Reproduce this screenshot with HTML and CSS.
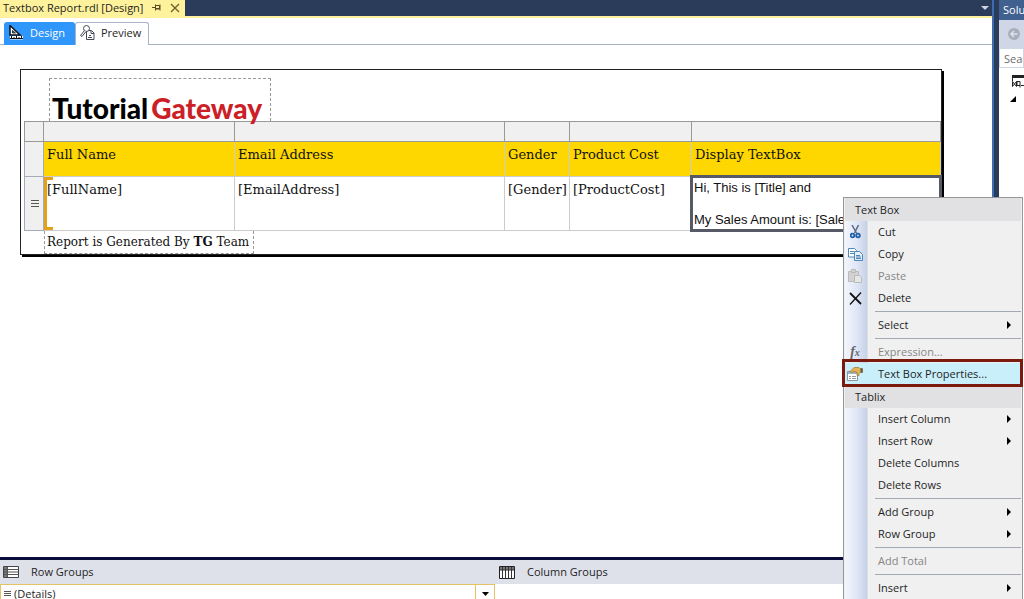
FILE: index.html
```
<!DOCTYPE html>
<html lang="en">
<head>
    <meta charset="UTF-8">
    <title>Textbox Report.rdl [Design]</title>
    <link rel="stylesheet" href="styles.css">
</head>
<body>

<div class="container">
    <main class="editor">
        <header class="titlebar">
            <div class="file">
                <span>Textbox Report.rdl [Design]</span>
                <button class="icon-btn" aria-label="Pin">
                    <svg width="9" height="8" viewBox="0 0 9 8" fill="none" stroke="#5c4a20"><path d="M0 3.500h3M3.500 0.500v6M3.500 1.500h4v3h-4M8 0.500v6M4 5h4"/></svg>
                </button>
                <button class="icon-btn" aria-label="Close">
                    <svg width="10" height="10" viewBox="0 0 10 10" fill="none" stroke="#75602c" stroke-width="1.400"><path d="M1 1l8 8M9 1l-8 8"/></svg>
                </button>
            </div>
            <button class="icon-btn" aria-label="Open files">
                <svg width="8" height="5" viewBox="0 0 8 5"><path d="M0 0h8l-4 4z" fill="#ced4e0"/></svg>
            </button>
        </header>

        <nav class="tabs">
            <button class="tab active">
                <svg width="15" height="15" viewBox="0 0 15 15"><path d="M1 0.500v9.500h10z" fill="#fff" stroke="#111" stroke-width="1.500"/><path d="M3.500 5.500v2.500h3z" fill="#2f96fb" stroke="#111" stroke-width="0.800"/><path d="M1 11h13v3.500h-13z" fill="#fff"/><path d="M1 13.500h13M2.500 11v2M5 12v1.500M7.500 11v2M10 12v1.500M12.500 11v2" stroke="#111" fill="none"/></svg>
                <span>Design</span>
            </button>
            <button class="tab">
                <svg width="15" height="15" viewBox="0 0 15 15" fill="#fff" stroke="#444a55"><path d="M6.500 5.500h5l2.500 2.500v6.500h-7.500z"/><path d="M11 5.500v3h3M8 12.500h4M9 10.500h2" fill="none"/><circle cx="6.500" cy="3.500" r="3"/><path d="M4.500 5.500l-4 5 1.500 1 4-5" /></svg>
                <span>Preview</span>
            </button>
        </nav>

        <section class="design">
            <div class="report">
                <div class="logo"><span>Tutorial</span><span class="red">Gateway</span></div>
                <table class="tablix">
                    <colgroup>
                        <col class="c-handle"><col class="c-name"><col class="c-email"><col class="c-gender"><col class="c-cost"><col>
                    </colgroup>
                    <thead>
                        <tr class="handles"><td></td><td></td><td></td><td></td><td></td><td></td></tr>
                        <tr class="heads">
                            <td class="handle"></td>
                            <th>Full Name</th>
                            <th>Email Address</th>
                            <th>Gender</th>
                            <th>Product Cost</th>
                            <th>Display TextBox</th>
                        </tr>
                    </thead>
                    <tbody>
                        <tr class="details">
                            <td class="handle"><svg width="8" height="8" viewBox="0 0 8 8" stroke="#555"><path d="M0 0.500h8M0 3.500h8M0 6.500h8"/></svg></td>
                            <td class="group">[FullName]</td>
                            <td>[EmailAddress]</td>
                            <td class="clip">[Gender]</td>
                            <td>[ProductCost]</td>
                            <td class="selected">
                                <p>Hi, This is [Title] and</p>
                                <p>My Sales Amount is: [Sales]</p>
                            </td>
                        </tr>
                    </tbody>
                </table>
                <div class="footer">Report is Generated By <b>TG</b> Team</div>
            </div>
        </section>

        <section class="groups">
            <div class="pane">
                <h3>
                    <svg width="16" height="13" viewBox="0 0 16 13"><path d="M0.500 0.500h15v11h-15z" fill="#fff" stroke="#444"/><path d="M1 1h3v10h-3z" fill="#777"/><path d="M1 3.500h14M1 6h14M1 8.500h14M4.500 1v10" stroke="#555"/></svg>
                    Row Groups
                </h3>
                <div class="row">
                    <svg width="7" height="6" viewBox="0 0 7 6" stroke="#555"><path d="M0 0.500h7M0 2.500h7M0 4.500h7"/></svg>
                    <span>(Details)</span>
                    <button class="arrow" aria-label="Group options">
                        <svg width="7" height="4" viewBox="0 0 7 4"><path d="M0 0h7l-3.500 4z"/></svg>
                    </button>
                </div>
            </div>
            <div class="pane">
                <h3>
                    <svg width="16" height="13" viewBox="0 0 16 13"><path d="M0.500 0.500h15v12h-15z" fill="#fff" stroke="#222"/><path d="M1 1h14v3h-14z" fill="#777"/><path d="M3.500 1v12M6.500 1v12M9.500 1v12M12.500 1v12M1 4h14" stroke="#333"/></svg>
                    Column Groups
                </h3>
            </div>
        </section>
    </main>

    <aside class="solution">
        <h2>Solution Explorer</h2>
        <div class="toolbar">
            <button class="icon-btn" aria-label="Back">
                <svg width="12" height="12" viewBox="0 0 12 12"><circle cx="6" cy="6" r="6" fill="#a9afba"/><path d="M9.500 6h-6M6 3l-3 3 3 3" fill="none" stroke="#dfe4ee" stroke-width="1.500"/></svg>
            </button>
        </div>
        <input class="search" type="text" placeholder="Search" aria-label="Search Solution Explorer">
        <div class="tree">
            <svg class="sln" width="16" height="14" viewBox="0 0 16 14" fill="none" stroke="#222"><path d="M0.500 6v-5h14" /><path d="M0 1.500h16" stroke-width="3"/><path d="M0.500 6.500l4 5v-5l-4 5zM5 6.500h3v6M5 6.500v4h3M9 10.500h6"/></svg>
            <svg width="6" height="6" viewBox="0 0 6 6"><path d="M6 0v6h-6z"/></svg>
        </div>
    </aside>

    <nav class="menu">
        <h4>Text Box</h4>
        <ul>
            <li><button><i><svg width="11" height="14" viewBox="0 0 11 14" fill="none"><path d="M2 0l4.500 8M8.500 0l-4 8" stroke="#5a6b80" stroke-width="1.500"/><circle cx="2.500" cy="10.500" r="1.800" stroke="#1c5fa8" stroke-width="1.800"/><circle cx="8" cy="10.500" r="1.800" stroke="#1c5fa8" stroke-width="1.800"/></svg></i>Cut</button></li>
            <li><button><i><svg width="15" height="13" viewBox="0 0 15 13" fill="#fff" stroke="#4e86b8"><path d="M0.500 0.500h6l2 2v6.500h-8z"/><path d="M2 3.500h4M2 5.500h4"/><path d="M6.500 3.500h5l3 3v6h-8z" fill="#e3f0fb"/><path d="M8 7.500h4M8 9h5M8 10.500h5" /></svg></i>Copy</button></li>
            <li><button disabled><i><svg width="14" height="14" viewBox="0 0 14 14" fill="#d2d2d2" stroke="#bababa"><path d="M0.500 2.500h10v10h-10z"/><path d="M3.500 0.500h4v3h-4z"/><path d="M6.500 6.500h5l2 2v5h-7z" fill="#e6e6e6"/></svg></i>Paste</button></li>
            <li><button><i><svg width="13" height="13" viewBox="0 0 13 13" fill="none" stroke="#111"><path d="M1 1l11 11" stroke-width="1.800"/><path d="M12 0.500l-11 12" stroke-width="1.300"/></svg></i>Delete</button></li>
            <li class="line"></li>
            <li><button class="sub">Select</button></li>
            <li class="line"></li>
            <li><button disabled><i class="fx">f<small>x</small></i>Expression...</button></li>
            <li><button class="current"><i><svg width="16" height="14" viewBox="0 0 16 14"><path d="M0.500 4.500h10v9h-10z" fill="#fff" stroke="#8a94a4"/><path d="M1 5h9v2h-9z" fill="#9fb4cf"/><path d="M2 9.500h2M5 9.500h4M2 11.500h2M5 11.500h4" stroke="#999"/><path d="M3 4.500l4-4h5l1 1h2.500v4h-2.500l-1 1v2h-2v-3l-3-1-2 1z" fill="#e3b252" stroke="#96691b" stroke-width="0.600"/><path d="M13.500 1.500h2v4h-2z" fill="#555"/></svg></i>Text Box Properties...</button></li>
        </ul>
        <h4>Tablix</h4>
        <ul>
            <li><button class="sub">Insert Column</button></li>
            <li><button class="sub">Insert Row</button></li>
            <li><button>Delete Columns</button></li>
            <li><button>Delete Rows</button></li>
            <li class="line"></li>
            <li><button class="sub">Add Group</button></li>
            <li><button class="sub">Row Group</button></li>
            <li class="line"></li>
            <li><button disabled>Add Total</button></li>
            <li class="line"></li>
            <li><button class="sub">Insert</button></li>
        </ul>
    </nav>
</div>

</body>
</html>
```
FILE: styles.css
```
* {
    box-sizing: border-box;
    margin: 0;
    padding: 0;
}
body {
    font-family: "Open Sans", "Noto Sans", sans-serif;
    font-size: 11px;
    line-height: 16px;
    color: #1e1e1e;
}
button,
input {
    font: inherit;
    color: inherit;
    border: none;
    background: none;
}
svg {
    display: block;
    flex: none;
}
.container {
    position: relative;
    display: flex;
    height: 100vh;
    overflow: hidden;
    background: #2b3b5a;
}
.editor {
    flex: 1;
    min-width: 0;
    display: flex;
    flex-direction: column;
    background: #fff;
    border-right: 2px solid #3d6db0;
}

/* title strip */
.titlebar {
    display: flex;
    justify-content: space-between;
    align-items: center;
    height: 18px;
    padding-right: 3px;
    background: #2b3b5a;
    border-bottom: 2px solid #fff0a0;
}
.titlebar .file {
    display: flex;
    align-items: center;
    gap: 9px;
    height: 18px;
    padding: 0 5px 0 3px;
    background: #fff29d;
}
.icon-btn {
    display: block;
}

/* design / preview tabs */
.tabs {
    display: flex;
    height: 27px;
    padding: 4px 4px 0;
    border-bottom: 1px solid #a9b4c6;
}
.tab {
    display: flex;
    align-items: center;
    gap: 6px;
    height: 23px;
    padding: 0 7px 3px 4px;
    border: 1px solid #a9b4c6;
    border-bottom: none;
    border-radius: 3px 3px 0 0;
    background: #fff;
}
.tab.active {
    padding-right: 9px;
    color: #fff;
    background: #2f96fb;
    border-color: #2f96fb;
}

/* report body */
.design {
    flex: 1;
    min-height: 0;
    padding: 24px 50px 0 20px;
}
.report {
    border: 1px solid #222;
    padding: 8px 0 0 3px;
    box-shadow: 2px 2px 0 #000;
    font-family: "DejaVu Serif", serif;
    font-size: 13px;
    color: #111;
}
.logo {
    display: flex;
    align-items: flex-end;
    gap: 3px;
    width: 222px;
    height: 43px;
    margin-left: 25px;
    padding-left: 2px;
    border: 1px dashed #999;
    border-bottom: none;
    font-family: Lato, sans-serif;
    font-size: 28px;
    font-weight: 900;
    line-height: 25px;
    color: #000;
}
.logo .red {
    color: #cc2027;
}
.tablix {
    width: 100%;
    table-layout: fixed;
    border-collapse: collapse;
}
.c-handle {
    width: 19px;
}
.c-name {
    width: 191px;
}
.c-email {
    width: 270px;
}
.c-gender {
    width: 65px;
}
.c-cost {
    width: 122px;
}
.tablix td,
.tablix th {
    border: 1px solid #ccc;
    padding: 5px 2px 0 3px;
    font-weight: normal;
    text-align: left;
    vertical-align: top;
    white-space: nowrap;
}
.tablix .handles td {
    height: 20px;
    padding: 0;
    background: #f0f0f0;
    border-color: #999;
}
.tablix .heads th {
    height: 35px;
    background: #ffd700;
}
.tablix .details td {
    height: 54px;
}
.tablix td.handle {
    padding: 0 0 0 6px;
    vertical-align: middle;
    background: #f0f0f0;
    border-color: #a5abb8;
}
.tablix .clip {
    overflow: hidden;
}
.tablix .group {
    position: relative;
}
.tablix .group::before {
    content: "";
    position: absolute;
    inset: 0 auto 0 0;
    width: 6px;
    border: 3px solid #e5a219;
    border-width: 3px 0 3px 3px;
    clip-path: polygon(0 0, 100% 0, 100% 100%, 0 100%);
}
.tablix .details .selected {
    position: relative;
    padding: 3px 2px 0;
    font-family: "Liberation Sans", sans-serif;
    font-size: 13px;
}
.selected::after {
    content: "";
    position: absolute;
    inset: -2px;
    border: 3px solid #555a66;
}
.selected p + p {
    margin-top: 16px;
}
.report .footer {
    width: max-content;
    height: 23px;
    margin-left: 20px;
    padding: 3px 4px 0 2px;
    border: 1px dashed #999;
    border-top: none;
    font-size: 12px;
}

/* grouping pane */
.groups {
    display: grid;
    grid-template-columns: 1fr 1fr;
    height: 42px;
    border-top: 3px solid #0a0a3c;
}
.groups h3 {
    display: flex;
    align-items: center;
    gap: 12px;
    height: 24px;
    padding-left: 3px;
    font-size: 11px;
    font-weight: normal;
    background: #dfe1ea;
}
.groups .row {
    display: flex;
    align-items: center;
    gap: 3px;
    height: 20px;
    margin-right: 1px;
    padding-left: 3px;
    border: 1px solid #e5c365;
}
.groups .arrow {
    display: flex;
    align-items: center;
    justify-content: center;
    width: 19px;
    height: 20px;
    margin-left: auto;
    border-left: 1px solid #e5c365;
}

/* solution explorer */
.solution {
    width: 25px;
    margin-left: 5px;
    overflow: hidden;
    background: #fff;
    white-space: nowrap;
}
.solution h2 {
    height: 20px;
    padding: 2px 0 0 4px;
    overflow: hidden;
    font-size: 11px;
    font-weight: normal;
    color: #fff;
    background: #40608f;
}
.toolbar {
    height: 28px;
    padding: 8px 0 0 9px;
    background: #cfd6e5;
}
.search {
    width: 100%;
    height: 20px;
    padding-left: 4px;
    border: 1px solid #cfd6e5;
}
.search::placeholder {
    color: #6d6d6d;
}
.tree {
    padding: 7px 0 0 11px;
}
.tree .sln {
    margin: 0 0 7px 2px;
}

/* context menu */
.menu {
    position: absolute;
    top: 197px;
    right: 1px;
    width: 180px;
    padding: 0 1px;
    border: 1px solid #979797;
    background: #f0f0f0;
}
.menu h4 {
    height: 23px;
    padding: 4px 0 0 10px;
    font-size: 11px;
    font-weight: normal;
    background: #e1e1e4;
}
.menu ul {
    list-style: none;
    background: linear-gradient(to right, #f2f5fd, #dfe6f6 12px, #c6d1e4 22px, #f0f0f0 23px);
}
.menu button {
    position: relative;
    display: block;
    width: 100%;
    height: 22px;
    padding-left: 33px;
    text-align: left;
}
.menu button:disabled {
    color: #868686;
}
.menu i {
    position: absolute;
    left: 0;
    top: 0;
    display: flex;
    align-items: center;
    justify-content: center;
    width: 20px;
    height: 22px;
}
.menu .fx {
    font: italic bold 14px "Liberation Serif", serif;
    color: #666;
}
.menu .fx small {
    font-size: 10px;
}
.menu .sub::after {
    content: "";
    position: absolute;
    right: 10px;
    top: 7px;
    border: 4px solid transparent;
    border-left-color: #000;
    border-right: none;
}
.menu .line {
    height: 5px;
    padding: 2px 0 0 30px;
}
.menu .line::before {
    content: "";
    display: block;
    height: 1px;
    background: #a3a8b5;
}
.menu .current {
    background: #c9effa;
}
.menu .current::after {
    content: "";
    position: absolute;
    inset: -4px -2px -2px -3px;
    border: 3px solid #7b1a0e;
}
```
